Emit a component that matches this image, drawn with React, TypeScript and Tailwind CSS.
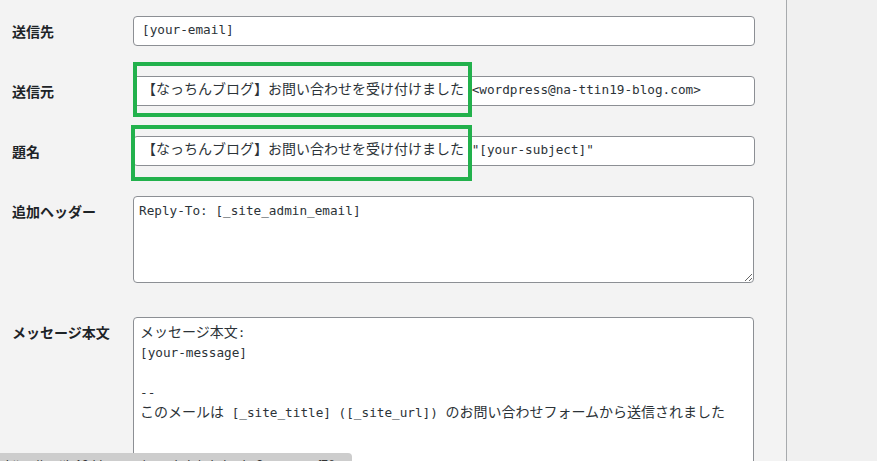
import React from "react";

const CJK_RE = /([\u3000-\u30ff\u3400-\u9fff\uff00-\uffef]+)/;

function Txt({ s }: { s: string }) {
  const parts = s.split(CJK_RE).filter((p) => p.length > 0);
  return (
    <>
      {parts.map((p, i) =>
        CJK_RE.test(p) ? (
          <span key={i} className="font-['Noto_Sans_CJK_JP',sans-serif] text-[14px]">
            {p}
          </span>
        ) : (
          <span key={i} className="font-['DejaVu_Sans_Mono',monospace] text-[12.7px] whitespace-pre">
            {p}
          </span>
        )
      )}
    </>
  );
}

function Label({ children }: { children: React.ReactNode }) {
  return (
    <div className="w-[133px] shrink-0 pl-[12px] leading-[30px] text-[14px] font-bold text-[#1d2327] font-['Noto_Sans_CJK_JP',sans-serif]">
      {children}
    </div>
  );
}

function Field({ children }: { children: React.ReactNode }) {
  return (
    <div className="w-[622px] h-[30px] border border-[#8c8f94] rounded-[4px] bg-white pl-[8px] leading-[23px] text-[#2c3338] whitespace-nowrap overflow-hidden">
      {children}
    </div>
  );
}

export default function App() {
  const message = [
    "メッセージ本文:",
    "[your-message]",
    "",
    "--",
    "このメールは [_site_title] ([_site_url]) のお問い合わせフォームから送信されました",
  ];
  return (
    <div className="relative w-[877px] h-[461px] flex overflow-hidden bg-[#f0f0f0]">
      <div className="w-[787px] h-full bg-[#f3f3f3] border-r border-[#a7aaad] pt-[16px] flex flex-col">
        {/* 送信先 */}
        <div className="flex">
          <Label>送信先</Label>
          <Field>
            <Txt s="[your-email]" />
          </Field>
        </div>

        {/* 送信元 */}
        <div className="flex mt-[30px]">
          <Label>送信元</Label>
          <div className="relative">
            <Field>
              <Txt s="【なっちんブログ】お問い合わせを受け付けました <wordpress@na-ttin19-blog.com>" />
            </Field>
            <div className="absolute left-0 top-[-14px] w-[339px] h-[55px] border-[4px] border-[#22b14c]" />
          </div>
        </div>

        {/* 題名 */}
        <div className="flex mt-[30px]">
          <Label>題名</Label>
          <div className="relative">
            <Field>
              <Txt s={'【なっちんブログ】お問い合わせを受け付けました "[your-subject]"'} />
            </Field>
            <div className="absolute left-[-2px] top-[-11px] w-[341px] h-[56px] border-[4px] border-[#22b14c]" />
          </div>
        </div>

        {/* 追加ヘッダー */}
        <div className="flex mt-[30px]">
          <Label>追加ヘッダー</Label>
          <textarea
            readOnly
            defaultValue="Reply-To: [_site_admin_email]"
            className="w-[621px] h-[87px] border border-[#8c8f94] rounded-[4px] bg-white px-[5px] pt-[4px] leading-[20px] text-[12.7px] text-[#2c3338] font-['DejaVu_Sans_Mono',monospace] outline-none"
          />
        </div>

        {/* メッセージ本文 */}
        <div className="flex mt-[34px]">
          <Label>メッセージ本文</Label>
          <div className="w-[621px] h-[220px] border border-[#8c8f94] rounded-[4px] bg-white px-[6px] pt-[3px] leading-[20px] text-[#2c3338]">
            {message.map((line, i) => (
              <div key={i} className="h-[20px] whitespace-nowrap">
                <Txt s={line} />
              </div>
            ))}
          </div>
        </div>
      </div>
      <div className="flex-1" />

      {/* status bar overlay */}
      <div className="absolute left-0 bottom-0 w-[352px] h-[8px] bg-[#cdcdcd] rounded-tr-[4px] overflow-hidden">
        <div className="pl-[6px] pt-[6px] text-[12px] leading-[12px] text-[#333] font-['Liberation_Sans',sans-serif] whitespace-nowrap">
          https://na-ttin19-blog.com/wp-admin/admin.php?page=wpcf7&amp;post=1&amp;action=edit
        </div>
      </div>
    </div>
  );
}
